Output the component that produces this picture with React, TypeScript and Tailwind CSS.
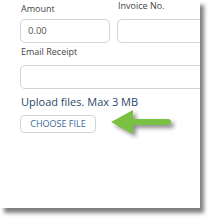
import React from 'react';

function Arrow() {
  return (
    <svg width="66" height="30" viewBox="0 0 66 30" className="drop-shadow-[3px_3px_2px_rgba(0,0,0,0.45)]">
      <path d="M2 14 L24 2 L24 11 L59 11 A2.5 2.5 0 0 1 59 17 L24 17 L24 26 Z" fill="#7ac143" />
    </svg>
  );
}

function App() {
  return (
    <div className="w-[215px] h-[224px] bg-white" style={{ fontFamily: '"Open Sans", "Noto Sans", sans-serif' }}>
      <div className="w-[200px] h-[208px] bg-white overflow-hidden shadow-[4px_5px_4px_rgba(0,0,0,0.5)] pl-[20px]">
        <div className="flex gap-[7px]">
          <div className="flex flex-col w-[90px] shrink-0">
            <span className="text-[9px] leading-[12px] text-[#444] pt-[3px] pl-[1px]">Amount</span>
            <div className="mt-[4px] h-[24px] border border-[#d4d4d4] rounded-[5px] flex items-center pl-[7px] text-[9.5px] text-[#555]">0.00</div>
          </div>
          <div className="flex flex-col w-[110px] shrink-0">
            <span className="text-[9px] leading-[12px] text-[#444] pl-[1px]">Invoice No.</span>
            <div className="mt-[7px] h-[24px] border border-[#d4d4d4] rounded-[5px]"></div>
          </div>
        </div>
        <div className="mt-[3px] text-[9px] leading-[12px] text-[#444] pl-[1px]">Email Receipt</div>
        <div className="mt-[7px] h-[24px] w-[200px] border border-[#d4d4d4] rounded-[5px]"></div>
        <div className="mt-[6px] text-[11px] leading-[14px] text-[#2c4a6b] pl-[1px]">Upload files. Max 3 MB</div>
        <div className="flex items-center gap-[13px]">
          <div className="w-[76px] h-[18px] border border-[#d4d4d4] rounded-[4px] flex items-center justify-center text-[9px] text-[#3a6a9c]">CHOOSE FILE</div>
          <div className="-mt-[1px]"><Arrow /></div>
        </div>
      </div>
    </div>
  );
}

export default App;
